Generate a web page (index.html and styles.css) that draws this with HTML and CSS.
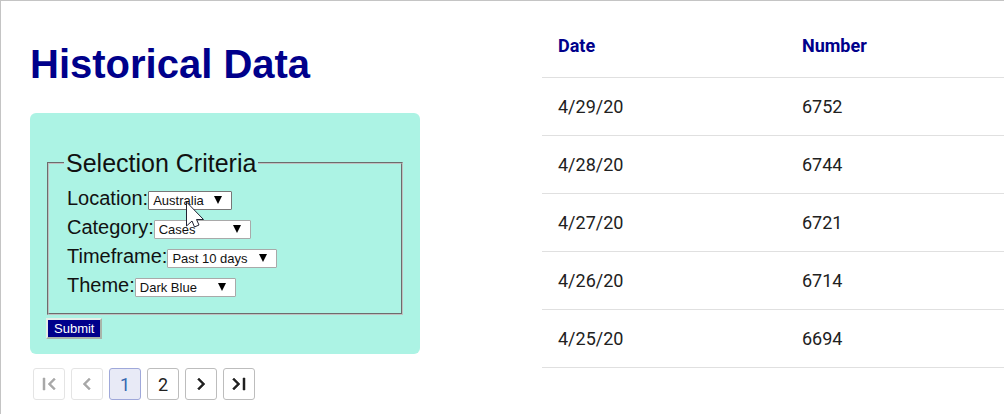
FILE: index.html
```html
<!DOCTYPE html>
<html lang="en">
<head>
<meta charset="utf-8">
<title>Historical Data</title>
<link rel="stylesheet" href="styles.css">
</head>
<body>
<main class="page">
  <section class="filters">
    <h1 class="title">Historical Data</h1>
    <form class="panel">
      <fieldset class="criteria">
        <legend class="legend">Selection Criteria</legend>
        <div class="field field-active">
          <label for="location">Location:</label>
          <select id="location" class="select select-location"><option>Australia</option></select>
          <svg class="cursor" width="19" height="28" viewBox="0 0 19 28" aria-hidden="true"><path d="M.5 1v24l5.500-5 2.500 6 4.500-2-2.500-5.500h7z" fill="#fff" stroke="#223" stroke-width="1"/></svg>
        </div>
        <div class="field">
          <label for="category">Category:</label>
          <select id="category" class="select select-category"><option>Cases</option></select>
        </div>
        <div class="field">
          <label for="timeframe">Timeframe:</label>
          <select id="timeframe" class="select select-timeframe"><option>Past 10 days</option></select>
        </div>
        <div class="field">
          <label for="theme">Theme:</label>
          <select id="theme" class="select select-theme"><option>Dark Blue</option></select>
        </div>
      </fieldset>
      <button type="button" class="submit">Submit</button>
    </form>
    <nav class="pager" aria-label="Pages">
      <button type="button" class="page-button" disabled aria-label="First page"><svg class="icon" viewBox="0 0 24 24"><path d="M18.410 16.590L13.820 12l4.590-4.590L17 6l-6 6 6 6zM6 6h2v12H6z"/></svg></button>
      <button type="button" class="page-button" disabled aria-label="Previous page"><svg class="icon" viewBox="0 0 24 24"><path d="M15.410 7.410L14 6l-6 6 6 6 1.410-1.410L10.830 12z"/></svg></button>
      <button type="button" class="page-button current" aria-current="page">1</button>
      <button type="button" class="page-button">2</button>
      <button type="button" class="page-button" aria-label="Next page"><svg class="icon" viewBox="0 0 24 24"><path d="M10 6L8.590 7.410 13.170 12l-4.580 4.590L10 18l6-6z"/></svg></button>
      <button type="button" class="page-button" aria-label="Last page"><svg class="icon" viewBox="0 0 24 24"><path d="M5.590 7.410L10.180 12l-4.590 4.590L7 18l6-6-6-6zM16 6h2v12h-2z"/></svg></button>
    </nav>
  </section>
  <table class="data">
    <thead><tr><th scope="col">Date</th><th scope="col">Number</th></tr></thead>
    <tbody>
      <tr><td>4/29/20</td><td>6752</td></tr>
      <tr><td>4/28/20</td><td>6744</td></tr>
      <tr><td>4/27/20</td><td>6721</td></tr>
      <tr><td>4/26/20</td><td>6714</td></tr>
      <tr><td>4/25/20</td><td>6694</td></tr>
    </tbody>
  </table>
</main>
</body>
</html>
```
FILE: styles.css
```css
* { box-sizing: border-box; }

body {
  margin: 0;
  background: #fff;
  color: #111;
  font-family: "Liberation Sans", Arial, sans-serif;
}

.page {
  display: grid;
  grid-template-columns: minmax(390px, 512fr) 462fr;
  align-items: start;
  min-height: 100vh;
  padding-left: 29px;
  border-top: 1px solid #c4c4c4;
  border-left: 1px solid #c4c4c4;
}

.title {
  margin: 0;
  padding: 39px 0 25px;
  color: #00008b;
  font-size: 40px;
  line-height: 48px;
}

.panel {
  max-width: 390px;
  padding: 36px 17px 15px 16px;
  border-radius: 6px;
  background: #acf3e4;
}

.criteria {
  margin: 0 0 0 1px;
  padding: 7px 15px 13px;
  border: 2px groove #c0c0c0;
}

.legend {
  padding: 0 2px;
  font-size: 25px;
  line-height: 28px;
}

.field {
  display: flex;
  align-items: center;
  height: 29px;
  padding-left: 3px;
  font-size: 20px;
}

.field-active { position: relative; }

.select {
  height: 19px;
  margin-top: 3px;
  padding: 0 4px;
  border: 1px solid #a9a9a9;
  border-radius: 1px;
  appearance: none;
  background: #fff url("data:image/svg+xml,%3Csvg xmlns='http://www.w3.org/2000/svg' width='8' height='8'%3E%3Cpath d='M0 0h8L4 8z'/%3E%3C/svg%3E") no-repeat right 9px top 4px;
  color: #111;
  font-family: inherit;
  font-size: 13px;
}

.field-active .select { border-color: #777; }
.select-location { width: 84px; }
.select-category { width: 97px; }
.select-timeframe { width: 110px; }
.select-theme { width: 101px; }

.cursor {
  position: absolute;
  top: 17px;
  left: 122px;
  z-index: 1;
}

.submit {
  display: block;
  height: 21px;
  margin-top: 3px;
  padding: 0 6px;
  border: 2px solid;
  border-color: #e6eee8 #a9b5a9 #a9b5a9 #e6eee8;
  background: #00008b;
  color: #fff;
  font-family: inherit;
  font-size: 13px;
  line-height: 16px;
}

.pager {
  display: flex;
  gap: 6px;
  padding: 14px 3px;
}

.page-button {
  display: flex;
  align-items: center;
  justify-content: center;
  width: 32px;
  height: 32px;
  padding: 0;
  border: 1px solid #bdbdbd;
  border-radius: 3px;
  background: #fff;
  color: #212121;
  font-family: Roboto, sans-serif;
  font-size: 18px;
}

.page-button:disabled {
  border-color: #e4e4e4;
  color: #a8a8a8;
}

.page-button.current {
  border-color: #9fa8da;
  background: #e8eaf6;
  color: #3467b0;
}

.icon {
  width: 24px;
  height: 24px;
  fill: currentColor;
  stroke: currentColor;
  stroke-width: 0.5;
}

.data {
  width: 100%;
  margin-top: 12px;
  border-collapse: collapse;
  table-layout: fixed;
  color: #212121;
  font-family: Roboto, sans-serif;
  font-size: 18px;
}

.data th,
.data td {
  height: 58px;
  padding: 0 16px;
  border-bottom: 1px solid #e0e0e0;
  text-align: left;
}

.data th {
  height: 64px;
  padding-top: 2px;
  color: #00008b;
  font-weight: 700;
}

.data th:first-child { width: 244px; }
```
